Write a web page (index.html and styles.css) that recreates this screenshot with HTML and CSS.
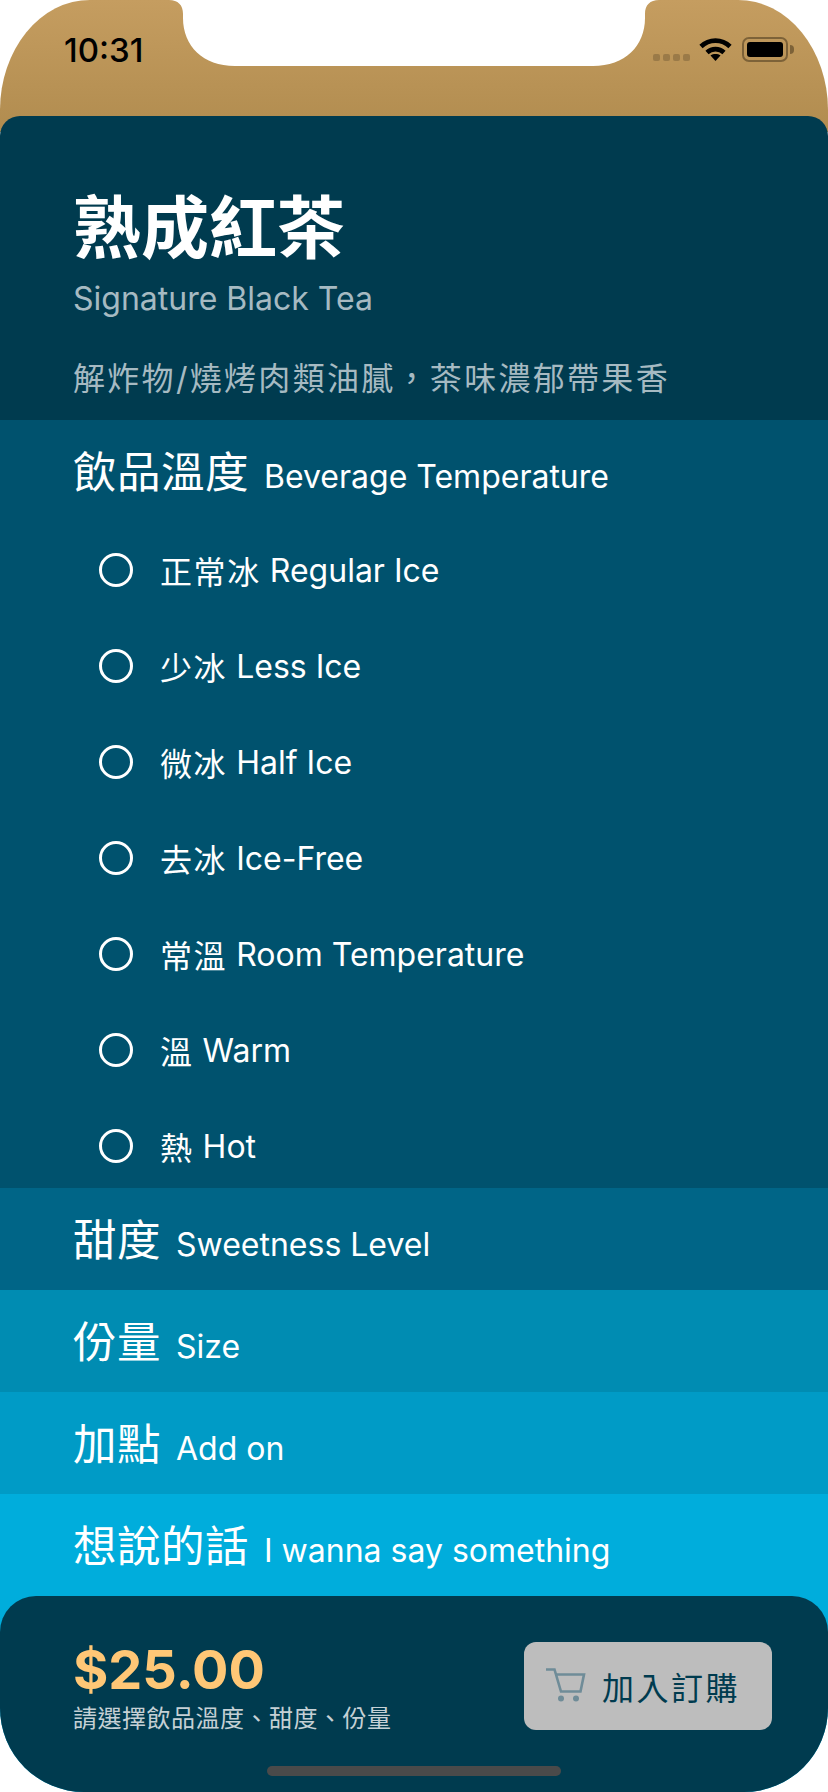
FILE: index.html
```html
<!DOCTYPE html>
<html lang="zh-Hant">
<head>
  <meta charset="UTF-8" />
  <title>熟成紅茶</title>
  <link rel="stylesheet" href="styles.css">
</head>
<body>
  <div class="phone">
    <svg class="notch" width="828" height="66" viewBox="0 0 828 66">
      <path fill="#fff" d="M169 0C178 0 183 5 183 14L183 18C183 46 203 66 235 66L593 66C625 66 645 46 645 18L645 14C645 5 650 0 659 0Z" />
    </svg>

    <div class="status-bar">
      <span class="time">10:31</span>
      <div class="status-icons">
        <div class="signal"><i></i><i></i><i></i><i></i></div>
        <svg class="wifi" width="33" height="24" viewBox="0 0 33 24">
          <path fill="none" stroke="#000" stroke-width="4.6" d="M2 9.5C10 1.6 23 1.6 31 9.5" />
          <path fill="none" stroke="#000" stroke-width="4.6" d="M8 15.5C12.8 11 20.2 11 25 15.5" />
          <path fill="#000" d="M11.5 18.5C14.5 16.6 18.5 16.6 21.5 18.5L16.5 24Z" />
        </svg>
        <div class="battery"><div class="battery-fill"></div></div>
      </div>
    </div>

    <div class="product">
      <h1>熟成紅茶</h1>
      <p class="product-en">Signature Black Tea</p>
      <p class="product-desc">解炸物/燒烤肉類油膩<span class="punct">，</span>茶味濃郁帶果香</p>
    </div>

    <section class="group group-temp">
      <h2 class="group-title">飲品溫度<span>Beverage Temperature</span></h2>
      <ul class="options">
        <li class="option"><span class="radio"></span><span class="zh">正常冰</span> Regular Ice</li>
        <li class="option"><span class="radio"></span><span class="zh">少冰</span> Less Ice</li>
        <li class="option"><span class="radio"></span><span class="zh">微冰</span> Half Ice</li>
        <li class="option"><span class="radio"></span><span class="zh">去冰</span> Ice-Free</li>
        <li class="option"><span class="radio"></span><span class="zh">常溫</span> Room Temperature</li>
        <li class="option"><span class="radio"></span><span class="zh">溫</span> Warm</li>
        <li class="option"><span class="radio"></span><span class="zh">熱</span> Hot</li>
      </ul>
    </section>

    <section class="group group-sweet">
      <h2 class="group-title">甜度<span>Sweetness Level</span></h2>
    </section>
    <section class="group group-size">
      <h2 class="group-title">份量<span>Size</span></h2>
    </section>
    <section class="group group-addon">
      <h2 class="group-title">加點<span>Add on</span></h2>
    </section>
    <section class="group group-note">
      <h2 class="group-title">想說的話<span>I wanna say something</span></h2>
    </section>

    <div class="footer-back">
      <footer class="footer">
        <div class="total">
          <div class="price">$25.00</div>
          <div class="hint">請選擇飲品溫度<span class="punct">、</span>甜度<span class="punct">、</span>份量</div>
        </div>
        <button class="add-btn" type="button">
          <svg class="cart" width="40" height="36" viewBox="0 0 40 36">
            <path fill="none" stroke="#6f8c98" stroke-width="2.6" d="M0 1.5H8.5L15 23.5H34.5L38 6.5H10" />
            <circle cx="15" cy="30.5" r="3" fill="#6f8c98" />
            <circle cx="30" cy="30.5" r="3" fill="#6f8c98" />
          </svg>
          加入訂購
        </button>
        <div class="home-bar"></div>
      </footer>
    </div>
  </div>
</body>
</html>
```

FILE: styles.css
```css
* {
  box-sizing: border-box;
}

body {
  margin: 0;
  background: #fff;
  font-family: Inter, 'Noto Sans CJK TC', sans-serif;
}

.phone {
  position: relative;
  display: flex;
  flex-direction: column;
  width: 828px;
  height: 1792px;
  border-radius: 90px 90px 84px 84px / 110px 110px 84px 84px;
  overflow: hidden;
  background: linear-gradient(#c59d60, #b18c4f) top / 100% 132px no-repeat;
}

.notch {
  position: absolute;
  top: 0;
  left: 0;
}

.status-bar {
  display: flex;
  justify-content: space-between;
  height: 116px;
  padding: 30px 40px 0 64px;
}

.time {
  font-size: 33px;
  font-weight: 500;
  line-height: 40px;
  color: #000;
}

.status-icons {
  display: flex;
  align-items: flex-start;
  padding-top: 7px;
}

.signal {
  display: flex;
  gap: 3px;
  margin-top: 17px;
  margin-right: 9px;
}

.signal i {
  width: 7px;
  height: 7px;
  border-radius: 2px;
  background: #9a7a48;
}

.wifi {
  margin-right: 10px;
}

.battery {
  position: relative;
  width: 46px;
  height: 25px;
  padding: 3px;
  border: 2px solid #7d6238;
  border-radius: 7px;
}

.battery::after {
  content: '';
  position: absolute;
  top: 6px;
  right: -8px;
  width: 4px;
  height: 9px;
  border-radius: 0 4px 4px 0;
  background: #7d6238;
}

.battery-fill {
  height: 100%;
  border-radius: 3px;
  background: #000;
}

.product {
  height: 304px;
  padding: 69px 73px 0;
  border-radius: 20px 20px 0 0;
  background: #003b4f;
}

h1 {
  margin: 0;
  font-size: 68px;
  font-weight: 700;
  line-height: 86px;
  color: #fff;
}

.product-en {
  margin: 8px 0 0;
  font-size: 32px;
  line-height: 40px;
  color: #a6bac2;
}

.product-desc {
  margin: 35px 0 0;
  font-size: 32px;
  line-height: 44px;
  letter-spacing: 2.3px;
  color: #a6bac2;
}

.punct {
  font-family: 'Noto Sans CJK SC', sans-serif;
}

.group {
  color: #fff;
}

.group-temp { background: #00526e; height: 768px; }
.group-sweet { background: #006587; }
.group-size { background: #008cb2; }
.group-addon { background: #009bc6; }
.group-note { background: #00addc; }

.group-title {
  display: flex;
  align-items: baseline;
  height: 102px;
  margin: 0;
  padding: 20px 0 0 73px;
  font-size: 43.5px;
  font-weight: 400;
  line-height: 64px;
  letter-spacing: 0.5px;
}

.group-title span {
  margin-left: 15px;
  font-size: 32px;
  letter-spacing: 0;
}

.options {
  display: flex;
  flex-direction: column;
  gap: 12px;
  margin: 0;
  padding: 6px 0 0 99px;
  list-style: none;
}

.option {
  display: flex;
  align-items: center;
  height: 84px;
  font-size: 32px;
  white-space: pre;
}

.zh {
  letter-spacing: 1.6px;
}

.radio {
  width: 34px;
  height: 34px;
  margin-right: 27px;
  border: 3px solid #fff;
  border-radius: 50%;
}

.footer-back {
  background: #00addc;
}

.footer {
  position: relative;
  display: flex;
  justify-content: space-between;
  align-items: flex-start;
  height: 196px;
  padding: 42px 56px 0 73px;
  border-radius: 36px 36px 0 0;
  background: #003b4f;
}

.price {
  font-size: 54px;
  font-weight: 700;
  line-height: 63px;
  color: #ffc776;
}

.hint {
  font-size: 24px;
  line-height: 32px;
  letter-spacing: 0.5px;
  color: #c5d0d5;
}

.add-btn {
  display: flex;
  align-items: center;
  gap: 16px;
  width: 248px;
  height: 88px;
  margin-top: 4px;
  padding: 0 0 0 22px;
  border: none;
  border-radius: 12px;
  background: #bdbdbd;
  font: inherit;
  font-size: 32px;
  letter-spacing: 2.5px;
  color: #003b4f;
}

.home-bar {
  position: absolute;
  left: 267px;
  bottom: 16px;
  width: 294px;
  height: 10px;
  border-radius: 5px;
  background: #4a4a4a;
}
```
